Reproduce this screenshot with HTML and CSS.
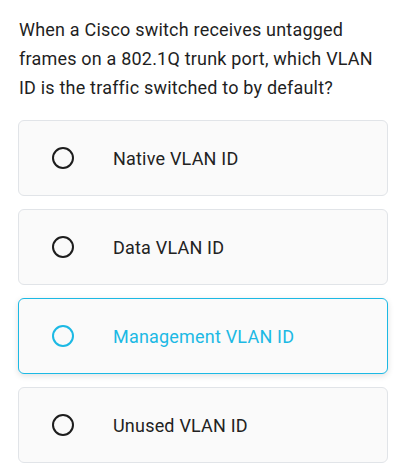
FILE: index.html
```html
<!DOCTYPE html>
<html>
<head>
<meta charset="utf-8">
<link rel="stylesheet" href="styles.css">
</head>
<body>
<div class="quiz">
  <p class="question">When a Cisco switch receives untagged frames on a 802.1Q trunk port, which VLAN ID is the traffic switched to by default?</p>
  <div class="options">
    <div class="option"><span class="radio"></span><span class="label">Native VLAN ID</span></div>
    <div class="option"><span class="radio"></span><span class="label">Data VLAN ID</span></div>
    <div class="option selected"><span class="radio"></span><span class="label">Management VLAN ID</span></div>
    <div class="option"><span class="radio"></span><span class="label">Unused VLAN ID</span></div>
  </div>
</div>
</body>
</html>
```
FILE: styles.css
```css
html, body {
  margin: 0;
  padding: 0;
  background: #ffffff;
}
body {
  font-family: Roboto, "Noto Sans", sans-serif;
  color: #222222;
}
.quiz {
  width: 370px;
  padding: 15px 0 0 18px;
}
.question {
  margin: 0 0 18px 0;
  font-size: 18px;
  line-height: 29px;
  letter-spacing: 0.2px;
  color: #1f1f1f;
  padding-left: 1px;
}
.options {
  display: flex;
  flex-direction: column;
  gap: 13px;
}
.option {
  box-sizing: border-box;
  height: 76px;
  display: flex;
  align-items: center;
  padding-left: 33px;
  background: #fafafa;
  border: 1px solid #e1e4e8;
  border-radius: 6px;
}
.radio {
  box-sizing: border-box;
  width: 22px;
  height: 22px;
  border: 2px solid #1d1d1d;
  border-radius: 50%;
  flex: none;
}
.label {
  margin-left: 39px;
  font-size: 18px;
  letter-spacing: 0.2px;
  color: #222222;
}
.option.selected {
  border-color: #1cb9e4;
  box-shadow: 0 2px 6px rgba(0, 0, 0, 0.12);
}
.option.selected .radio {
  border-color: #1cb9e4;
  border-width: 2.5px;
}
.option.selected .label {
  color: #1cb9e4;
}
```
